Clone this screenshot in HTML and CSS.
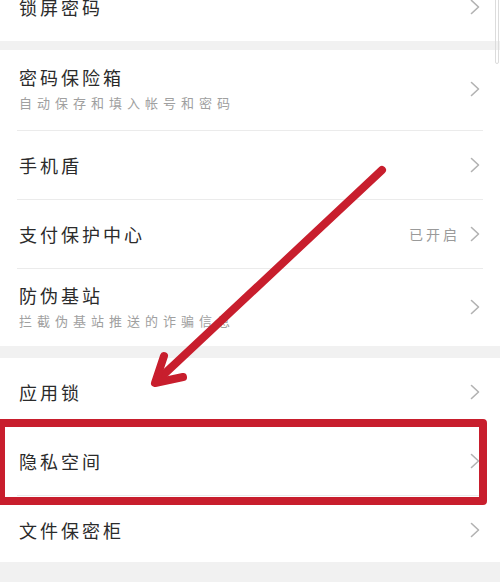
FILE: index.html
```html
<!DOCTYPE html>
<html lang="zh-CN">
<head>
<meta charset="utf-8">
<title>安全设置</title>
<link rel="stylesheet" href="styles.css">
</head>
<body>
<div class="page">
  <section class="group first">
    <div class="row"><span class="title">锁屏密码</span><span class="chev"><svg viewBox="0 0 10 16" width="10" height="16"><polyline points="1.5,1.5 8.5,8 1.5,14.5"/></svg></span></div>
  </section>
  <div class="band top"></div>
  <section class="group">
    <div class="row two"><div class="text"><span class="title">密码保险箱</span><span class="sub">自动保存和填入帐号和密码</span></div><span class="chev"><svg viewBox="0 0 10 16" width="10" height="16"><polyline points="1.5,1.5 8.5,8 1.5,14.5"/></svg></span></div>
    <div class="divider"></div>
    <div class="row"><span class="title">手机盾</span><span class="chev"><svg viewBox="0 0 10 16" width="10" height="16"><polyline points="1.5,1.5 8.5,8 1.5,14.5"/></svg></span></div>
    <div class="divider"></div>
    <div class="row"><span class="title">支付保护中心</span><span class="right"><span class="status">已开启</span><span class="chev"><svg viewBox="0 0 10 16" width="10" height="16"><polyline points="1.5,1.5 8.5,8 1.5,14.5"/></svg></span></span></div>
    <div class="divider"></div>
    <div class="row two last"><div class="text"><span class="title">防伪基站</span><span class="sub">拦截伪基站推送的诈骗信息</span></div><span class="chev"><svg viewBox="0 0 10 16" width="10" height="16"><polyline points="1.5,1.5 8.5,8 1.5,14.5"/></svg></span></div>
  </section>
  <div class="band"></div>
  <section class="group">
    <div class="row"><span class="title">应用锁</span><span class="chev"><svg viewBox="0 0 10 16" width="10" height="16"><polyline points="1.5,1.5 8.5,8 1.5,14.5"/></svg></span></div>
    <div class="divider"></div>
    <div class="row"><span class="title">隐私空间</span><span class="chev"><svg viewBox="0 0 10 16" width="10" height="16"><polyline points="1.5,1.5 8.5,8 1.5,14.5"/></svg></span></div>
    <div class="divider"></div>
    <div class="row short"><span class="title">文件保密柜</span><span class="chev"><svg viewBox="0 0 10 16" width="10" height="16"><polyline points="1.5,1.5 8.5,8 1.5,14.5"/></svg></span></div>
  </section>
  <div class="band tail"></div>

  <div class="scroll"></div>
  <div class="highlight"></div>
  <svg class="arrow" viewBox="0 0 500 582" width="500" height="582">
    <line x1="382" y1="170" x2="160" y2="378"/>
    <polyline points="164,356 155,383 183,377"/>
  </svg>
</div>
</body>
</html>
```

FILE: styles.css
```css
html, body {
  margin: 0;
  padding: 0;
  background: #ffffff;
}
body {
  width: 500px;
  height: 582px;
  overflow: hidden;
  font-family: "Noto Sans CJK SC", "Noto Sans", sans-serif;
  color: #2a2a2a;
}
.page {
  position: relative;
  width: 500px;
  height: 582px;
  overflow: hidden;
}
.group {
  background: #ffffff;
  display: flex;
  flex-direction: column;
}
.group.first {
  margin-top: -27px;
}
.band {
  height: 12px;
  background: #f1f1f1;
}
.band.top {
  height: 9px;
}
.band.tail {
  height: 30px;
}
.row {
  height: 68px;
  display: flex;
  align-items: center;
  justify-content: space-between;
  padding: 0 20px 0 19px;
  box-sizing: border-box;
}
.row.short {
  height: 66px;
  padding-top: 2px;
}
.row.two {
  height: 80px;
  padding-bottom: 2px;
}
.row.two.last {
  height: 77px;
}
.text {
  display: flex;
  flex-direction: column;
  gap: 6px;
}
.title {
  font-size: 18px;
  line-height: 22px;
  letter-spacing: 3px;
  color: #2b2b2b;
  font-weight: 400;
}
.sub {
  font-size: 13px;
  line-height: 18px;
  letter-spacing: 5px;
  color: #a0a0a0;
}
.right {
  display: flex;
  align-items: center;
  gap: 10px;
}
.status {
  font-size: 14px;
  letter-spacing: 3px;
  color: #9a9a9a;
}
.chev {
  display: flex;
  align-items: center;
}
.chev svg polyline {
  fill: none;
  stroke: #b2b2b2;
  stroke-width: 1.6;
  stroke-linecap: round;
  stroke-linejoin: round;
}
.divider {
  height: 1px;
  background: #ebebeb;
  margin: 0 17px;
}
.scroll {
  position: absolute;
  right: 1px;
  top: -4px;
  width: 2px;
  height: 66px;
  border: 1px solid #dcdcdc;
  border-radius: 2px;
}
.highlight {
  position: absolute;
  left: -3px;
  top: 419px;
  width: 474px;
  height: 70px;
  border: 8px solid #c81e2d;
  border-radius: 4px;
}
.arrow {
  position: absolute;
  left: 0;
  top: 0;
}
.arrow line,
.arrow polyline {
  fill: none;
  stroke: #c81e2d;
  stroke-width: 8;
  stroke-linecap: round;
  stroke-linejoin: round;
}
```
